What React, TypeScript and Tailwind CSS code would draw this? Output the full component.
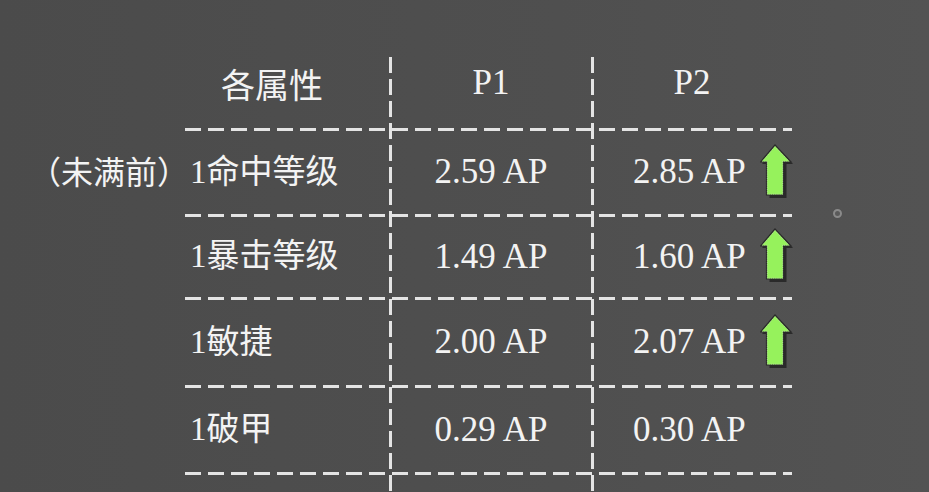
const rows = [
  { label: "（未满前）", name: "1命中等级", p1: "2.59 AP", p2: "2.85 AP", up: true, h: "row-start-3" },
  { label: "", name: "1暴击等级", p1: "1.49 AP", p2: "1.60 AP", up: true, h: "row-start-5" },
  { label: "", name: "1敏捷", p1: "2.00 AP", p2: "2.07 AP", up: true, h: "row-start-7" },
  { label: "", name: "1破甲", p1: "0.29 AP", p2: "0.30 AP", up: false, h: "row-start-9" },
];

const lineRows = ["row-start-2", "row-start-4", "row-start-6", "row-start-8", "row-start-10"];

function UpArrow() {
  return (
    <svg width="35" height="56" viewBox="0 0 35 56" className="-mr-[3px] -mt-[4px] shrink-0">
      <polygon
        points="17,4 33,21 26.5,21 26.5,55 9.5,55 9.5,21 2,21"
        fill="#1e1e1e"
        opacity="0.75"
      />
      <polygon
        points="15,2 31,19 23.5,19 23.5,52 6.5,52 6.5,19 0.5,19"
        fill="#96f25c"
        stroke="#2a2a2a"
        strokeWidth="1.2"
        strokeLinejoin="miter"
      />
      <polygon
        points="15,3.5 29,18.2 22.7,18.2 22.7,51.2 7.3,51.2 7.3,18.2 2.5,18.2"
        fill="none"
        stroke="#d6d6d6"
        strokeWidth="0.8"
        strokeDasharray="1 1.2"
        opacity="0.7"
      />
    </svg>
  );
}

export default function App() {
  return (
    <div className="relative h-[492px] w-full overflow-hidden bg-[linear-gradient(90deg,#4b4b4b,#4f4f4f_60%,#535353)] pt-[57px] font-['Liberation_Serif','Noto_Sans_CJK_SC',serif] text-[35px] text-[#f3f3f3]">
      <div className="grid h-full grid-cols-[185px_205px_202px_200px] grid-rows-[71px_3px_83px_3px_80px_3px_85px_3px_84px_3px_1fr]">
        {/* header */}
        <div className="col-start-2 row-start-1 flex items-center pb-[18px] pl-[36px] font-['Noto_Sans_CJK_SC',sans-serif] text-[34px]">
          各属性
        </div>
        <div className="col-start-3 row-start-1 flex items-center justify-center pb-[18px]">P1</div>
        <div className="col-start-4 row-start-1 flex items-center justify-center pb-[18px]">P2</div>

        {/* dashed row lines */}
        {lineRows.map((r) => (
          <div
            key={r}
            className={`${r} col-start-2 col-span-3 bg-[repeating-linear-gradient(90deg,#e4e4e4_0_16px,transparent_16px_23px)]`}
          />
        ))}

        {/* dashed column lines */}
        <div className="col-start-3 row-span-full -ml-[1px] w-[3px] bg-[repeating-linear-gradient(180deg,#e4e4e4_0_16px,transparent_16px_22px)]" />
        <div className="col-start-4 row-span-full -ml-[1px] w-[3px] bg-[repeating-linear-gradient(180deg,#e4e4e4_0_16px,transparent_16px_22px)]" />

        {/* data rows */}
        {rows.map((row) => (
          <div key={row.name} className="contents">
            <div className={`${row.h} col-start-1 -mr-[4px] flex items-center justify-end text-[32px]`}>
              {row.label}
            </div>
            <div className={`${row.h} col-start-2 flex items-center pl-[5px] text-[33px]`}>{row.name}</div>
            <div className={`${row.h} col-start-3 flex items-center justify-center`}>{row.p1}</div>
            <div className={`${row.h} col-start-4 flex items-center pl-[41px]`}>
              <span>{row.p2}</span>
              {row.up && (
                <span className="ml-auto flex items-center">
                  <UpArrow />
                </span>
              )}
            </div>
          </div>
        ))}
      </div>

      {/* small cursor ring */}
      <div className="absolute left-[833px] top-[209px] h-[9px] w-[9px] rounded-full border-2 border-[#8a8a8a] bg-[#5a5a5a]" />
    </div>
  );
}
